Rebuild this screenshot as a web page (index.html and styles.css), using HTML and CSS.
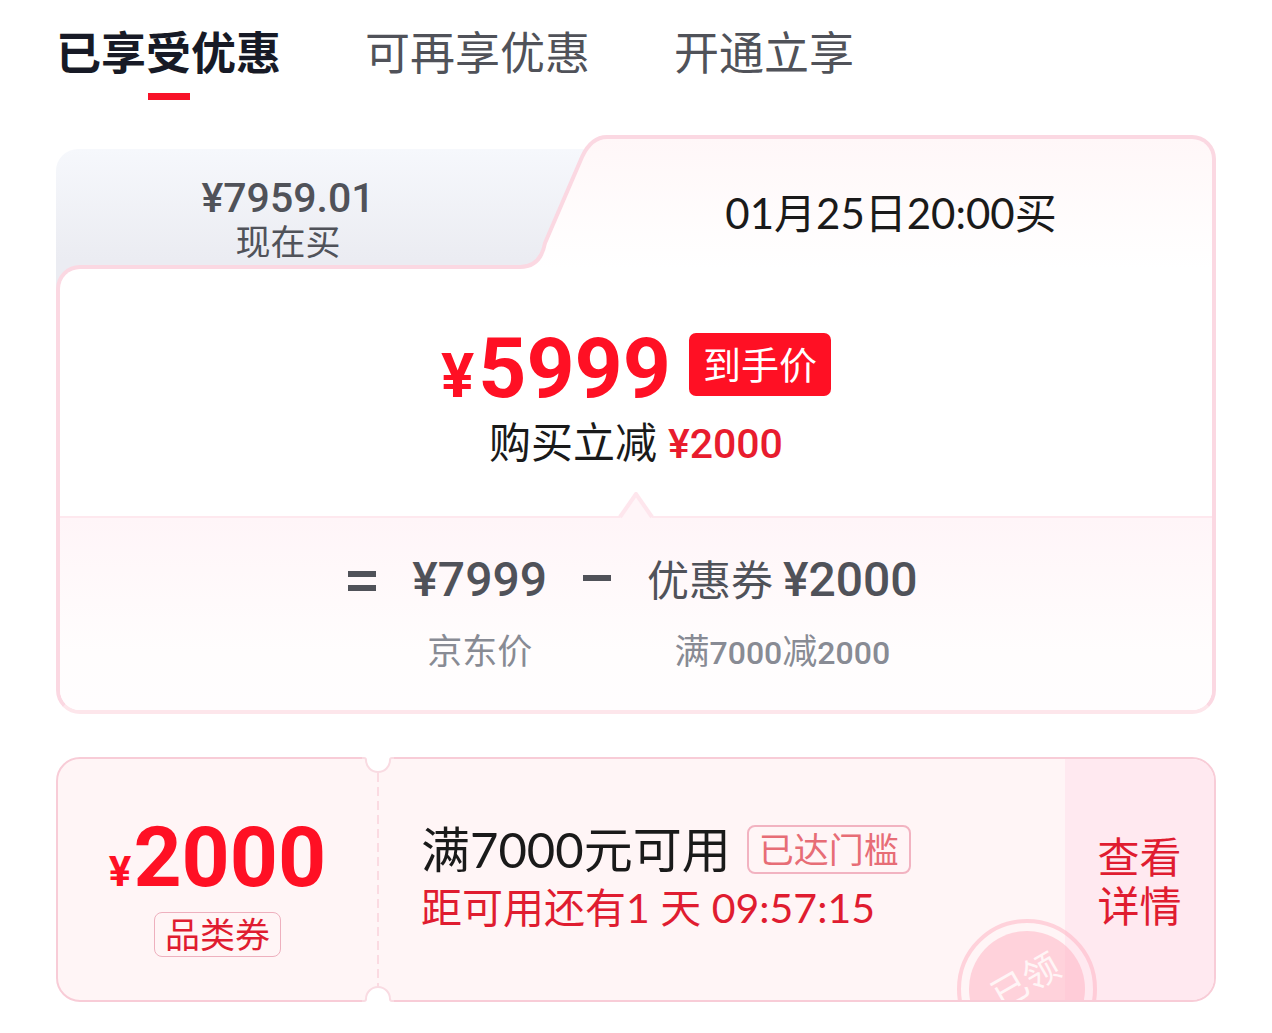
FILE: index.html
```html
<!DOCTYPE html>
<html lang="zh-CN">
<head>
    <meta charset="UTF-8">
    <meta name="viewport" content="width=device-width, initial-scale=1.0">
    <title>优惠明细</title>
    <link rel="stylesheet" href="styles.css">
</head>
<body>
    <nav class="tabs">
        <button type="button" class="tab active">已享受优惠</button>
        <button type="button" class="tab">可再享优惠</button>
        <button type="button" class="tab">开通立享</button>
    </nav>

    <section class="price-card">
        <button type="button" class="buy-now">
            <span class="num buy-now-price">¥7959.01</span>
            <span class="buy-now-label">现在买</span>
        </button>
        <!-- borde inclinado entre las dos pestañas -->
        <svg class="slant" width="90" height="134" viewBox="0 0 90 134" aria-hidden="true">
            <defs>
                <linearGradient id="slantFill" x1="0" y1="0" x2="0" y2="1">
                    <stop offset="0" stop-color="#fff7f8"/>
                    <stop offset="1" stop-color="#ffffff"/>
                </linearGradient>
            </defs>
            <path d="M0 132C13 132 22 124 25 108L62 22C68 9 76 2 87 2H90V134H0Z" fill="url(#slantFill)"/>
            <path d="M0 132C13 132 22 124 25 108L62 22C68 9 76 2 87 2H90" fill="none" stroke="#fbd8e2" stroke-width="4"/>
        </svg>
        <button type="button" class="buy-later">01月25日20:00买</button>

        <div class="price-body">
            <div class="final-price">
                <span class="num final-number"><small>¥</small>5999</span>
                <span class="final-badge">到手价</span>
            </div>
            <p class="saving">购买立减 <b class="num">¥2000</b></p>

            <div class="formula">
                <svg class="arrow" width="38" height="27" viewBox="0 0 38 27" aria-hidden="true">
                    <path d="M2 27L19 2L36 27Z" fill="#fff5f8"/>
                    <path d="M3 25L19 2L35 25" fill="none" stroke="#fee6ed" stroke-width="4"/>
                </svg>
                <span class="sign equal"></span>
                <div class="term">
                    <span class="term-value"><b class="num">¥7999</b></span>
                    <span class="term-note">京东价</span>
                </div>
                <span class="sign minus"></span>
                <div class="term">
                    <span class="term-value">优惠券<b class="num">¥2000</b></span>
                    <span class="term-note">满<b class="num">7000</b>减<b class="num">2000</b></span>
                </div>
            </div>
        </div>
    </section>

    <section class="coupon">
        <div class="coupon-amount">
            <span class="num amount"><small>¥</small>2000</span>
            <span class="coupon-type">品类券</span>
        </div>
        <div class="coupon-info">
            <div class="coupon-title">
                <span>满7000元可用</span>
                <span class="reached">已达门槛</span>
            </div>
            <p class="countdown">距可用还有1 天 09:57:15</p>
        </div>
        <a class="coupon-link" href="#">查看<br>详情</a>

        <div class="stamp-area">
            <span class="stamp"><span class="stamp-inner">已领</span></span>
        </div>
        <svg class="notch notch-top" width="32" height="16" viewBox="0 0 32 16" aria-hidden="true">
            <path d="M0 0H32V2H30Q28 2 28 4A12 11 0 0 1 4 4Q4 2 2 2H0Z" fill="#ffffff"/>
            <path d="M0 1H2Q4 1 4 3A12 12 0 0 0 28 3Q28 1 30 1H32" fill="none" stroke="#f9dbe2" stroke-width="2"/>
        </svg>
        <svg class="notch notch-bottom" width="32" height="16" viewBox="0 0 32 16" aria-hidden="true">
            <path d="M0 0H32V2H30Q28 2 28 4A12 11 0 0 1 4 4Q4 2 2 2H0Z" fill="#ffffff"/>
            <path d="M0 1H2Q4 1 4 3A12 12 0 0 0 28 3Q28 1 30 1H32" fill="none" stroke="#f9dbe2" stroke-width="2"/>
        </svg>
    </section>
</body>
</html>
```
FILE: styles.css
```css
* {
    box-sizing: border-box;
}
body {
    margin: 0;
    padding: 20px 56px 32px;
    background-color: #ffffff;
    color: #1a1a1a;
    font-family: Lato, "Noto Sans CJK SC", sans-serif;
}
p {
    margin: 0;
}
button {
    border: none;
    padding: 0;
    background: none;
    color: inherit;
    font-family: inherit;
    cursor: pointer;
}
.num {
    font-family: Roboto, "Noto Sans CJK SC", sans-serif;
    font-weight: 500;
}

/* Tabs */
.tabs {
    display: flex;
    gap: 84px;
    margin-bottom: 35px;
}
.tab {
    display: flex;
    flex-direction: column;
    align-items: center;
    gap: 6px;
    font-size: 45px;
    line-height: 67px;
    color: #505259;
}
.tab::after {
    content: "";
    width: 42px;
    height: 7px;
}
.tab.active {
    font-weight: bold;
    color: #171a26;
}
.tab.active::after {
    background-color: #f81228;
}

/* Price card */
.price-card {
    display: grid;
    grid-template-columns: 40% 90px 1fr;
    grid-template-rows: 130px 4px 20px auto;
    margin-bottom: 43px;
}
.buy-now {
    grid-column: 1 / 3;
    grid-row: 1 / 4;
    display: flex;
    flex-direction: column;
    align-items: center;
    margin-top: 14px;
    padding: 28px 90px 0 0;
    border-radius: 22px 0 0 0;
    background: linear-gradient(#f6f8fc, #ebecf2 110px);
    color: #505259;
}
.buy-now-price {
    font-size: 41px;
    line-height: 42px;
}
.buy-now-label {
    font-size: 35px;
    line-height: 44px;
}
.slant {
    grid-column: 2;
    grid-row: 1 / 3;
    z-index: 2;
    display: block;
}
.buy-later {
    grid-column: 3;
    grid-row: 1 / 3;
    z-index: 2;
    padding: 12px 40px 0 0;
    border-top: 4px solid #fbd8e2;
    border-right: 4px solid #fbd8e2;
    border-radius: 0 24px 0 0;
    background: linear-gradient(#fff7f8, #ffffff);
    font-size: 42px;
}
.price-body {
    grid-column: 1 / 4;
    grid-row: 2 / 5;
    z-index: 1;
    padding-top: 64px;
    border: 4px solid #fbd8e2;
    border-bottom-color: #fde6eb;
    border-radius: 24px 0 24px 24px;
    background-color: #ffffff;
}
.final-price {
    display: flex;
    justify-content: center;
    align-items: flex-start;
    gap: 18px;
}
.final-number {
    display: flex;
    align-items: baseline;
    gap: 4px;
    padding-top: 4px;
    font-size: 84px;
    font-weight: bold;
    line-height: 63px;
    color: #ff1024;
}
.final-number small {
    font-size: 62px;
    line-height: 1;
}
.final-badge {
    padding: 0 14px;
    border-radius: 7px;
    background-color: #ff1024;
    color: #ffffff;
    font-size: 38px;
    line-height: 63px;
}
.saving {
    margin: 5px 0 42px;
    text-align: center;
    font-size: 42px;
    line-height: 60px;
}
.saving .num {
    font-size: 41px;
    color: #e81c2e;
}
.formula {
    position: relative;
    display: flex;
    justify-content: center;
    gap: 36px;
    padding: 28px 6px 31px 0;
    border-top: 2px solid #fee8ee;
    border-radius: 0 0 20px 20px;
    background: linear-gradient(#fff5f8, #fffdfd 70%, #fffdfe);
    color: #505259;
}
.arrow {
    position: absolute;
    top: -26px;
    left: calc(50% - 19px);
}
.sign {
    width: 28px;
    height: 20px;
    margin-top: 25px;
}
.equal {
    border-top: 6px solid #505259;
    border-bottom: 6px solid #505259;
}
.minus {
    height: 6px;
    margin-top: 29px;
    background-color: #505259;
}
.term {
    display: flex;
    flex-direction: column;
    align-items: center;
    gap: 10px;
}
.term-value {
    display: flex;
    align-items: baseline;
    gap: 10px;
    font-size: 42px;
    line-height: 68px;
}
.term-value .num {
    font-size: 48px;
}
.term-note {
    font-size: 35px;
    line-height: 52px;
    color: #888b94;
}
.term-note .num {
    font-size: 32px;
}

/* Coupon */
.coupon {
    position: relative;
    display: flex;
    min-height: 245px;
    border: 2px solid #f8ccd7;
    border-radius: 24px;
    background-color: #fff5f6;
}
.coupon-amount {
    display: flex;
    flex-direction: column;
    align-items: center;
    justify-content: center;
    gap: 18px;
    width: 321px;
    padding: 20px 2px 0 0;
    /* linea punteada del talon */
    background: repeating-linear-gradient(#fbdbe2 0 9px, transparent 9px 14px) right / 2px 100% no-repeat;
}
.amount {
    display: flex;
    align-items: baseline;
    gap: 2px;
    font-size: 84px;
    font-weight: bold;
    line-height: 72px;
    color: #ff1024;
}
.amount small {
    font-size: 42px;
    line-height: 1;
}
.coupon-type {
    padding: 0 10px;
    border: 1px solid #eeb0be;
    border-radius: 8px;
    font-size: 35px;
    line-height: 43px;
    color: #e01c30;
}
.coupon-info {
    flex: 1;
    padding: 57px 0 0 42px;
}
.coupon-title {
    display: flex;
    align-items: center;
    gap: 16px;
    font-size: 49px;
    line-height: 66px;
}
.reached {
    padding: 0 10px;
    border: 2px solid #f2b3c1;
    border-radius: 8px;
    font-size: 35px;
    line-height: 45px;
    color: #e76d76;
}
.countdown {
    font-size: 41px;
    line-height: 52px;
    color: #e01c30;
}
.coupon-link {
    display: flex;
    align-items: center;
    justify-content: center;
    width: 149px;
    padding-top: 4px;
    border-radius: 0 22px 22px 0;
    background-color: #ffe9f0;
    font-size: 42px;
    line-height: 49px;
    color: #e01c30;
    text-decoration: none;
}
.stamp-area {
    position: absolute;
    inset: 0;
    overflow: hidden;
    border-radius: 22px;
    pointer-events: none;
}
.stamp {
    position: absolute;
    right: 117px;
    bottom: -59px;
    display: flex;
    width: 140px;
    height: 140px;
    padding: 8px;
    border: 4px solid rgba(255, 176, 192, 0.5);
    border-radius: 50%;
}
.stamp-inner {
    flex: 1;
    padding-left: 6px;
    border-radius: 50%;
    background-color: rgba(255, 176, 192, 0.5);
    color: #fff5f6;
    font-size: 36px;
    line-height: 98px;
    text-align: center;
    transform: rotate(-30deg);
}
.notch {
    position: absolute;
    left: 304px;
}
.notch-top {
    top: -2px;
}
.notch-bottom {
    bottom: -2px;
    transform: scaleY(-1);
}
```
